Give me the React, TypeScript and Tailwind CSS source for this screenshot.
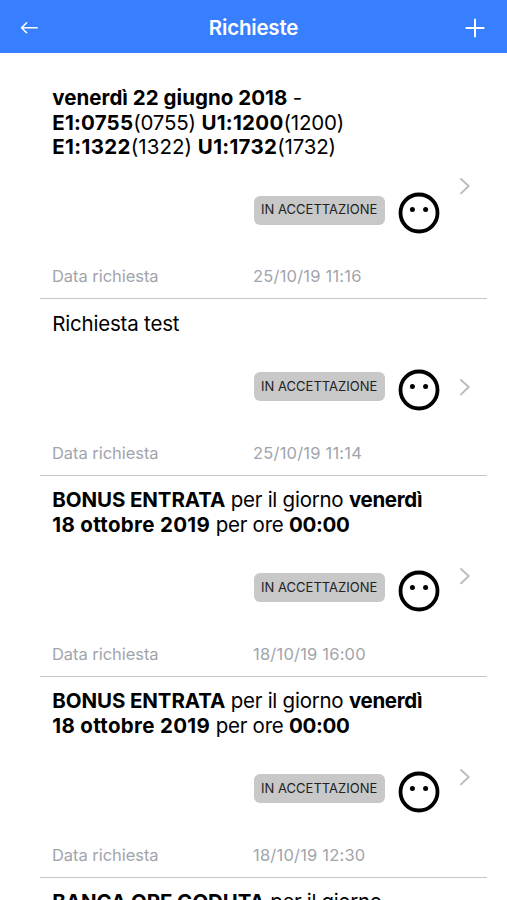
import type { ReactNode } from "react";

type Request = {
  lines: ReactNode[];
  date: string;
};

const bonus = [
  <>
    <b className="tracking-[-0.1px]">BONUS ENTRATA</b>
    <span className="tracking-[-0.25px]"> per il giorno </span>
    <b className="tracking-[-0.3px]">venerdì</b>
  </>,
  <>
    <b className="tracking-[0.32px]">18 ottobre 2019</b>
    <span className="tracking-[-0.25px]"> per ore </span>
    <b className="tracking-[-0.3px]">00:00</b>
  </>,
];

const requests: Request[] = [
  {
    lines: [
      <>
        <b className="tracking-[0.03px]">venerdì 22 giugno 2018</b> -
      </>,
      <>
        <b className="tracking-[0.2px]">E1:0755</b>(0755){" "}
        <b className="tracking-[0.3px]">U1:1200</b>(1200)
      </>,
      <>
        <b className="tracking-[0.35px]">E1:1322</b>
        <span className="tracking-[0.05px]">(1322) </span>
        <b className="tracking-[0.3px]">U1:1732</b>(1732)
      </>,
    ],
    date: "25/10/19 11:16",
  },
  { lines: ["Richiesta test"], date: "25/10/19 11:14" },
  { lines: bonus, date: "18/10/19 16:00" },
  { lines: bonus, date: "18/10/19 12:30" },
  {
    lines: [
      <>
        <b className="tracking-[-0.1px]">BANCA ORE GODUTA</b>{" "}
        <span className="tracking-[-0.35px]">per il giorno</span>
      </>,
    ],
    date: "18/10/19 12:28",
  },
];

function FaceIcon() {
  return (
    <svg className="size-[42px]" viewBox="0 0 42 42" fill="none">
      <circle cx="21" cy="21" r="18.5" stroke="#000" strokeWidth="3.8" />
      <circle cx="14.4" cy="17.4" r="2.5" fill="#000" />
      <circle cx="27.6" cy="17.4" r="2.5" fill="#000" />
    </svg>
  );
}

function Header() {
  return (
    <header className="flex h-[53.3px] shrink-0 items-center justify-between bg-[#387fff] pt-[3px] pr-[22px] pl-5 text-white">
      <svg className="h-[14px] w-[20px]" viewBox="0 0 20 14" fill="none">
        <path
          d="M6.6 1.8 1.5 6.8l5.1 5M1.8 6.8h15.4"
          stroke="currentColor"
          strokeWidth="1.5"
          strokeLinecap="round"
          strokeLinejoin="round"
        />
      </svg>
      <h1 className="pl-[2px] text-[20.5px] leading-6 font-semibold tracking-[-0.2px]">
        Richieste
      </h1>
      <svg className="size-[20px]" viewBox="0 0 20 20" fill="none">
        <path
          d="M10 1.4v17.2M1.4 10h17.2"
          stroke="currentColor"
          strokeWidth="2"
          strokeLinecap="round"
        />
      </svg>
    </header>
  );
}

function RequestRow({ lines, date }: Request) {
  return (
    <li className="flex items-center border-b border-[#c6c6c8] pr-4 pl-3">
      <div className="flex-1 pt-[12.5px]">
        <div className="pl-[0.3px] text-[20.5px] leading-[24.6px] tracking-[-0.2px] whitespace-nowrap text-black [&_b]:font-bold">
          {lines.map((line, i) => (
            <p key={i}>{line}</p>
          ))}
        </div>
        <div className="flex h-[138.3px] flex-col pt-[32.5px] pl-[201.7px]">
          <div className="flex items-start gap-[13.7px]">
            <span className="mt-[3.2px] flex h-[29.3px] w-[131px] items-center justify-center rounded-[6px] bg-[#c8c8c8] text-[13px] whitespace-nowrap text-[#222]">
              IN ACCETTAZIONE
            </span>
            <FaceIcon />
          </div>
          <div className="mt-auto mb-[11.8px] -ml-[201.7px] flex text-[16.5px] leading-5 whitespace-nowrap text-[#a2a4ab]">
            <span className="w-[201px] tracking-[-0.05px]">Data richiesta</span>
            <span className="tracking-[0.2px]">{date}</span>
          </div>
        </div>
      </div>
      <svg className="h-[18px] w-[12px]" viewBox="0 0 12 18" fill="none">
        <path
          d="m2 2 7.7 7L2 16.4"
          stroke="#bdbdbf"
          strokeWidth="2"
          strokeLinecap="round"
          strokeLinejoin="round"
        />
      </svg>
    </li>
  );
}

function App() {
  return (
    <div className="flex h-[900px] flex-col overflow-hidden bg-white font-['Inter','Liberation_Sans',sans-serif]">
      <Header />
      <ul className="mt-[20.3px] mr-5 ml-10">
        {requests.map((request, i) => (
          <RequestRow key={i} {...request} />
        ))}
      </ul>
    </div>
  );
}

export default App;
